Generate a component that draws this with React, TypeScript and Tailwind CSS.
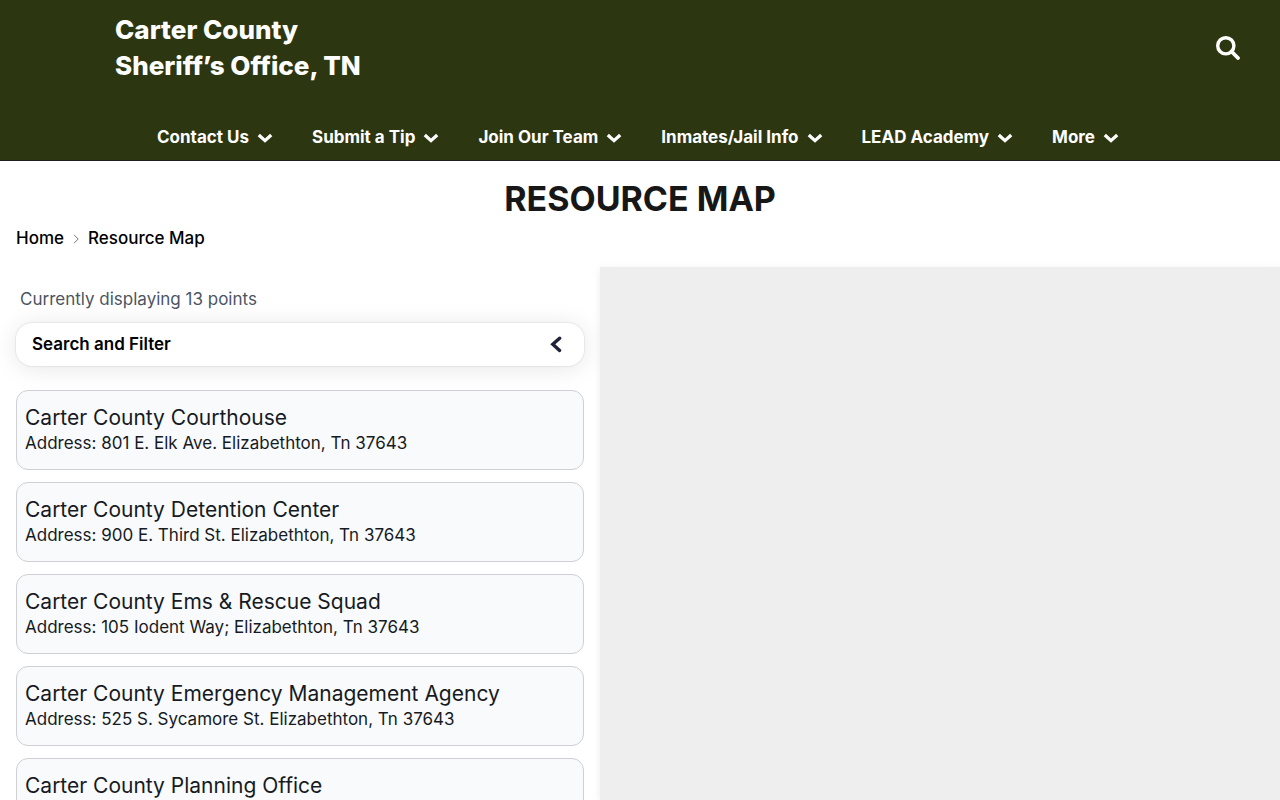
import React, { useState } from "react";

const menuItems = [
  "Contact Us",
  "Submit a Tip",
  "Join Our Team",
  "Inmates/Jail Info",
  "LEAD Academy",
  "More",
];

const locations = [
  { name: "Carter County Courthouse", address: "801 E. Elk Ave. Elizabethton, Tn 37643" },
  { name: "Carter County Detention Center", address: "900 E. Third St. Elizabethton, Tn 37643" },
  { name: "Carter County Ems & Rescue Squad", address: "105 Iodent Way; Elizabethton, Tn 37643" },
  { name: "Carter County Emergency Management Agency", address: "525 S. Sycamore St. Elizabethton, Tn 37643" },
  { name: "Carter County Planning Office", address: "" },
];

const ChevronDown = () => (
  <svg width="16" height="10" viewBox="0 0 16 10" fill="none" aria-hidden="true">
    <path d="M1.8 2 8 7.6 14.2 2" stroke="currentColor" strokeWidth="3.3" />
  </svg>
);

const Header = () => (
  <header className="border-b border-[#1f1f1f] bg-[#2c3711] text-white">
    <div className="flex h-28 items-start justify-between pr-10 pl-[115px]">
      <a href="#" className="pt-3 text-[26px] leading-9 font-extrabold">
        Carter County
        <br />
        Sheriff’s Office, TN
      </a>
      <button aria-label="Search" className="mt-9">
        <svg width="24" height="24" viewBox="0 0 24 24" fill="none" aria-hidden="true">
          <circle cx="9.8" cy="9.8" r="8.1" stroke="currentColor" strokeWidth="3.4" />
          <path d="m15.5 15.5 6.5 6.5" stroke="currentColor" strokeWidth="3.8" strokeLinecap="round" />
        </svg>
      </button>
    </div>
    <nav className="flex h-12 justify-center gap-[39px] pt-[3px] pr-1">
      {menuItems.map((item) => (
        <button key={item} className="flex items-center gap-2 text-[17px] font-bold whitespace-nowrap">
          {item}
          <ChevronDown />
        </button>
      ))}
    </nav>
  </header>
);

const App: React.FC = () => {
  const [filterOpen, setFilterOpen] = useState(false);

  return (
    <div className="flex h-screen flex-col overflow-hidden bg-white font-[Inter,'Open_Sans',sans-serif] text-black">
      <Header />

      {/* Title and breadcrumbs */}
      <div className="px-4 pt-[18px]">
        <h1 className="text-center text-[34px] leading-10 font-bold text-[#171717]">RESOURCE MAP</h1>
        <nav aria-label="Breadcrumb" className="flex h-12 items-start gap-2 pt-[7px] text-[17px] leading-6 font-medium">
          <a href="#">Home</a>
          <svg className="mt-2" width="8" height="10" viewBox="0 0 8 10" fill="none" aria-hidden="true">
            <path d="m2 .8 4.2 4.2L2 9.2" stroke="#555" strokeWidth="0.8" />
          </svg>
          <a href="#">Resource Map</a>
        </nav>
      </div>

      <main className="flex min-h-0 flex-1">
        <section className="w-[600px] shrink-0 overflow-hidden px-4 pt-5">
          <p className="px-1 text-[17px] leading-6 text-[#4b5563]">Currently displaying 13 points</p>
          <button
            onClick={() => setFilterOpen(!filterOpen)}
            aria-expanded={filterOpen}
            className="mt-3 flex h-[43px] w-full items-center justify-between rounded-2xl bg-white pr-[22px] pl-4 text-[17px] font-semibold shadow-[0_0_1px_1px_rgba(0,0,0,0.06),0_2px_24px_rgba(0,0,0,0.10)]"
          >
            Search and Filter
            <svg width="12" height="18" viewBox="0 0 12 18" fill="none" aria-hidden="true">
              <path d="M9.6 2.2 2.8 8.2l6.8 6.2" stroke="#1e2337" strokeWidth="3.4" strokeLinecap="round" />
            </svg>
          </button>
          <ul className="mt-6 flex flex-col gap-3">
            {locations.map((location) => (
              <li key={location.name} className="min-h-20 rounded-xl border border-[#cfd0d4] bg-[#f8fafc] px-2 pt-3.5 pb-3 text-[#171a1f]">
                <h2 className="text-[21px] leading-[26px]">{location.name}</h2>
                {location.address && <p className="text-[17px] leading-6">Address: {location.address}</p>}
              </li>
            ))}
          </ul>
        </section>

        {/* Map area */}
        <section aria-label="Map" className="flex-1 bg-[#eeeeee] shadow-[0_2px_8px_rgba(0,0,0,0.08)]" />
      </main>
    </div>
  );
};

export default App;
